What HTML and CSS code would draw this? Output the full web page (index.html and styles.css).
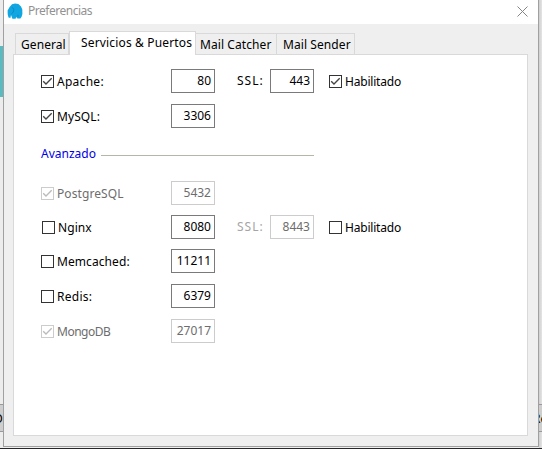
FILE: index.html
```html
<!DOCTYPE html>
<html lang="es">
<head>
<meta charset="utf-8">
<title>Preferencias</title>
<link rel="stylesheet" href="styles.css">
</head>
<body>
<svg width="0" height="0" class="defs">
  <symbol id="tick" viewBox="0 0 11 11"><path d="M1.2 5.2 4 8 9.7 2.3" fill="none" stroke="currentColor" stroke-width="1.35"/></symbol>
</svg>
<div class="desktop">
  <div class="behind left"><div class="logo-edge"></div><div class="button-edge"><span>D</span></div></div>
  <div class="behind right"><div class="button-edge"><span>Re</span></div></div>
  <main class="window">
    <header class="titlebar">
      <svg class="app-icon" viewBox="0 0 16 17"><path d="M2.6 4 5 1.3 8 .4 11.4 1.1 14 3.4 15.3 6.5 15.4 11 14.6 13.8 13.4 15.6 10.4 15.6 9.8 14.2 9 14.4 8.6 15.8 5.4 15.8 4.6 13.4 4 12 3.4 15 1.5 14.6.7 11.3.6 7.6Z" fill="#0fa6e2"/><path d="M4.8 4.2 7 6.3 6.2 9.3 4.4 10.8M11 11.8V13.6" fill="none" stroke="#0784bf" stroke-width=".8"/></svg>
      <h1>Preferencias</h1>
      <svg class="close" viewBox="0 0 11 11"><path d="M.5.5 10.5 10.5M10.5.5.5 10.5" stroke="#858585" stroke-width="1" fill="none"/></svg>
    </header>
    <nav class="tabs">
      <div class="tab general">General</div>
      <div class="tab active">Servicios &amp; Puertos</div>
      <div class="tab catcher">Mail Catcher</div>
      <div class="tab sender">Mail Sender</div>
    </nav>
    <section class="panel">
      <div class="row">
        <label class="check"><svg class="box"><use href="#tick"/></svg><span class="loose">Apache:</span></label>
        <div class="field">80</div><span class="ssl">SSL:</span><div class="field">443</div>
        <label class="check enable"><svg class="box"><use href="#tick"/></svg><span>Habilitado</span></label>
      </div>
      <div class="row">
        <label class="check"><svg class="box"><use href="#tick"/></svg><span>MySQL:</span></label>
        <div class="field">3306</div>
      </div>
      <div class="divider"><span>Avanzado</span><i></i></div>
      <div class="row disabled">
        <label class="check"><svg class="box"><use href="#tick"/></svg><span>PostgreSQL</span></label>
        <div class="field">5432</div>
      </div>
      <div class="row nginx">
        <label class="check"><svg class="box"></svg><span>Nginx</span></label>
        <div class="field">8080</div><span class="ssl off">SSL:</span><div class="field off">8443</div>
        <label class="check enable"><svg class="box"></svg><span>Habilitado</span></label>
      </div>
      <div class="row">
        <label class="check"><svg class="box"></svg><span>Memcached:</span></label>
        <div class="field">11211</div>
      </div>
      <div class="row">
        <label class="check"><svg class="box"></svg><span class="loose">Redis:</span></label>
        <div class="field">6379</div>
      </div>
      <div class="row disabled">
        <label class="check"><svg class="box"><use href="#tick"/></svg><span class="tight">MongoDB</span></label>
        <div class="field">27017</div>
      </div>
    </section>
  </main>
</div>
</body>
</html>
```
FILE: styles.css
```css
* { box-sizing: border-box; }
body {
  margin: 0;
  font: 12px/16px "Noto Sans", "Open Sans", sans-serif;
  color: #000;
  background: #eee;
  overflow: hidden;
}
.defs { position: absolute; }
.desktop {
  display: grid;
  grid-template-columns: 3px 536px 3px;
  height: 449px;
  border-bottom: 1px solid #262628;
}
.behind { grid-row: 1; background: #ececec; overflow: hidden; }
.left { grid-column: 1; }
.right { grid-column: 3; background: linear-gradient(90deg, #cfcfcf, #e4e4e4); padding-top: 404px; }
.logo-edge { height: 51px; margin: 46px 0 307px; background: #59bac0; }
.button-edge {
  height: 28px;
  border: solid #999;
  border-width: 1px 0;
  background: #cecece;
  padding-top: 6px;
}
.button-edge span { display: block; }
.left span { margin-left: -6px; }
.right span { margin-left: -6px; }
.window {
  grid-column: 2;
  grid-row: 1;
  height: 447px;
  border: 1px solid #a0a0a0;
  border-top: 0;
  background: #efefef;
}
.titlebar {
  height: 24px;
  background: #fff;
  display: flex;
  align-items: flex-start;
  padding-left: 3px;
}
.app-icon { width: 16px; height: 17px; margin-top: 3px; }
.titlebar h1 { margin: 3px 0 0 5px; font-size: 12px; font-weight: 400; color: #929292; letter-spacing: -.48px; }
.close { width: 11px; height: 11px; margin: 6px 10px 0 auto; }
.tabs { display: flex; align-items: flex-end; height: 30px; padding-left: 11px; }
.tab {
  height: 21px;
  border: 1px solid #d9d9d9;
  border-width: 1px 1px 0 0;
  padding: 3px 0 0 4px;
  white-space: nowrap;
  letter-spacing: .08px;
}
.general { width: 54px; border-left-width: 1px; padding-left: 5px; }
.active {
  position: relative;
  z-index: 1;
  width: 127px;
  height: 24px;
  margin-bottom: -1px;
  padding: 3px 0 0 11px;
  border-left-width: 1px;
  background: #fff;
  letter-spacing: .16px;
}
.catcher { width: 81px; }
.sender { width: 78px; padding-left: 6px; }
.panel {
  width: 515px;
  height: 382px;
  margin-left: 9px;
  border: 1px solid #d9d9d9;
  background: #fff;
  padding: 14px 0 0 27px;
}
.row {
  display: grid;
  grid-template-columns: 130px 44px 55px 44px auto;
  height: 24px;
  margin-bottom: 11px;
}
.check { display: flex; align-items: center; gap: 3px; padding-top: 1px; letter-spacing: .08px; }
.check .loose { letter-spacing: .28px; }
.check .tight { letter-spacing: -.5px; }
.check.enable { padding-left: 15px; letter-spacing: -.2px; }
.box { width: 13px; height: 13px; border: 1px solid #333; color: #444; overflow: hidden; flex: none; }
.field { height: 24px; border: 1px solid #7a7a7a; text-align: right; padding: 3px 3px 0 0; }
.ssl { padding: 4px 0 0 22px; letter-spacing: 1px; }
.divider { display: flex; align-items: center; width: 273px; height: 16px; margin: 18px 0 19px; color: #0000e8; gap: 5px; }
.divider i { flex: 1; height: 1px; background: #b5b5a8; margin-top: 3px; }
.disabled, .off { color: #6d6d6d; }
.ssl.off { color: #a5a5a5; }
.disabled .box { border-color: #ccc; color: #bbb; }
.disabled .field, .field.off { border-color: #ccc; }
.disabled, .nginx { margin-bottom: 10px; }
.nginx > .check:first-child { padding-left: 1px; }
```
